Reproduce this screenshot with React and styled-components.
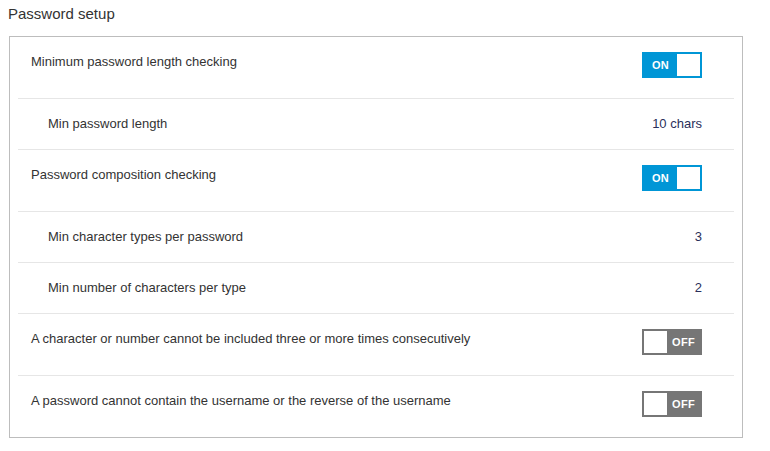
import React from "react";
import styled, { createGlobalStyle } from "styled-components";

const Global = createGlobalStyle`
  html, body { margin: 0; padding: 0; background: #fff; }
  body { font-family: "Liberation Sans", Arial, sans-serif; color: #333; }
`;

const Page = styled.div`
  width: 770px;
  height: 451px;
  box-sizing: border-box;
  padding-top: 4px;
`;

const Title = styled.h2`
  margin: 0 0 12px 8px;
  font-size: 15px;
  line-height: 20px;
  font-weight: normal;
  color: #333;
`;

const Panel = styled.div`
  margin-left: 9px;
  width: 734px;
  box-sizing: border-box;
  border: 1px solid #bdbdbd;
  padding: 0 8px;
`;

const Row = styled.div`
  display: flex;
  justify-content: space-between;
  align-items: ${(p) => (p.$toggle ? "flex-start" : "center")};
  box-sizing: border-box;
  height: ${(p) => (p.$toggle ? 62 : 51)}px;
  border-bottom: 1px solid #e6e6e6;
  padding: ${(p) => (p.$toggle ? "15px" : "0")} 32px 0 ${(p) => (p.$sub ? 30 : 13)}px;
  &:last-child { border-bottom: none; height: 61px; }
`;

const Label = styled.span`
  font-size: 13px;
  line-height: 20px;
  color: #333;
`;

const Value = styled.span`
  font-size: 13px;
  line-height: 20px;
  color: #2a2f5a;
`;

const Switch = styled.div`
  width: 60px;
  height: 26px;
  box-sizing: border-box;
  padding: 2px;
  display: flex;
  flex-direction: ${(p) => (p.$on ? "row" : "row-reverse")};
  align-items: center;
  justify-content: space-between;
  background: ${(p) => (p.$on ? "#0096d6" : "#767676")};
`;

const SwitchText = styled.span`
  flex: 1;
  text-align: center;
  color: #fff;
  font-size: 11px;
  font-weight: bold;
  letter-spacing: 0.3px;
`;

const Knob = styled.span`
  width: 23px;
  height: 22px;
  background: #fff;
`;

const Toggle = ({ on }) => (
  <Switch $on={on}>
    <SwitchText>{on ? "ON" : "OFF"}</SwitchText>
    <Knob />
  </Switch>
);

const rows = [
  { label: "Minimum password length checking", toggle: true, on: true },
  { label: "Min password length", sub: true, value: "10 chars" },
  { label: "Password composition checking", toggle: true, on: true },
  { label: "Min character types per password", sub: true, value: "3" },
  { label: "Min number of characters per type", sub: true, value: "2" },
  { label: "A character or number cannot be included three or more times consecutively", toggle: true, on: false },
  { label: "A password cannot contain the username or the reverse of the username", toggle: true, on: false },
];

export default function App() {
  return (
    <Page>
      <Global />
      <Title>Password setup</Title>
      <Panel>
        {rows.map((r, i) => (
          <Row key={i} $toggle={r.toggle} $sub={r.sub}>
            <Label>{r.label}</Label>
            {r.toggle ? <Toggle on={r.on} /> : <Value>{r.value}</Value>}
          </Row>
        ))}
      </Panel>
    </Page>
  );
}
